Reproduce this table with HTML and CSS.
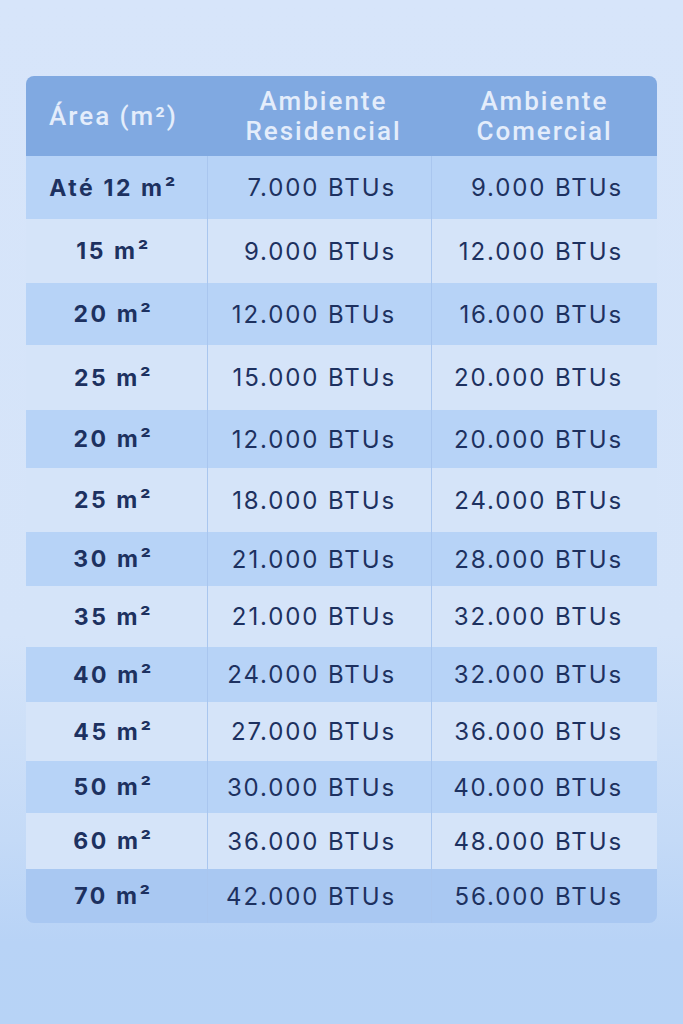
FILE: index.html
```html
<!DOCTYPE html>
<html lang="pt-BR">
<head>
<meta charset="utf-8">
<title>Tabela de BTUs</title>
<link rel="stylesheet" href="styles.css">
</head>
<body>
<main class="page">
  <div class="table">
    <div class="row head">
      <div class="cell c1">Área (m²)</div>
      <div class="cell c2">Ambiente<br>Residencial</div>
      <div class="cell c3">Ambiente<br>Comercial</div>
    </div>
    <div class="row blue"><div class="cell c1">Até 12 m²</div><div class="cell c2">7.000 BTUs</div><div class="cell c3">9.000 BTUs</div></div>
    <div class="row light"><div class="cell c1">15 m²</div><div class="cell c2">9.000 BTUs</div><div class="cell c3">12.000 BTUs</div></div>
    <div class="row blue"><div class="cell c1">20 m²</div><div class="cell c2">12.000 BTUs</div><div class="cell c3">16.000 BTUs</div></div>
    <div class="row light"><div class="cell c1">25 m²</div><div class="cell c2">15.000 BTUs</div><div class="cell c3">20.000 BTUs</div></div>
    <div class="row blue"><div class="cell c1">20 m²</div><div class="cell c2">12.000 BTUs</div><div class="cell c3">20.000 BTUs</div></div>
    <div class="row light"><div class="cell c1">25 m²</div><div class="cell c2">18.000 BTUs</div><div class="cell c3">24.000 BTUs</div></div>
    <div class="row blue"><div class="cell c1">30 m²</div><div class="cell c2">21.000 BTUs</div><div class="cell c3">28.000 BTUs</div></div>
    <div class="row light"><div class="cell c1">35 m²</div><div class="cell c2">21.000 BTUs</div><div class="cell c3">32.000 BTUs</div></div>
    <div class="row blue"><div class="cell c1">40 m²</div><div class="cell c2">24.000 BTUs</div><div class="cell c3">32.000 BTUs</div></div>
    <div class="row light"><div class="cell c1">45 m²</div><div class="cell c2">27.000 BTUs</div><div class="cell c3">36.000 BTUs</div></div>
    <div class="row blue"><div class="cell c1">50 m²</div><div class="cell c2">30.000 BTUs</div><div class="cell c3">40.000 BTUs</div></div>
    <div class="row light"><div class="cell c1">60 m²</div><div class="cell c2">36.000 BTUs</div><div class="cell c3">48.000 BTUs</div></div>
    <div class="row deep last"><div class="cell c1">70 m²</div><div class="cell c2">42.000 BTUs</div><div class="cell c3">56.000 BTUs</div></div>
  </div>
</main>
</body>
</html>
```

FILE: styles.css
```css
* { box-sizing: border-box; }

html, body {
  margin: 0;
  padding: 0;
}

body {
  width: 683px;
  height: 1024px;
  overflow: hidden;
  background: linear-gradient(180deg, #d7e5fa 0%, #d5e4f9 62%, #c4daf7 82%, #b8d3f6 92%, #b7d3f6 100%);
  font-family: Inter, "Noto Sans", Arial, sans-serif;
  color: #1d3160;
}

.page {
  padding: 76px 26px 0 26px;
}

.table {
  width: 631px;
  display: grid;
  grid-template-columns: 181px 224px 226px;
  grid-template-rows: 80px 63px 64px 62px 65px 58px 64px 54px 61px 55px 59px 52px 56px 54px;
  border-radius: 8px;
  overflow: hidden;
}

.row {
  display: contents;
}

.cell {
  display: flex;
  align-items: center;
  font-size: 24px;
  font-weight: 400;
  letter-spacing: 1.9px;
  white-space: nowrap;
}

.cell.c1 {
  justify-content: center;
  padding-right: 6px;
  font-weight: 700;
  font-size: 23px;
  letter-spacing: 2.6px;
}

.cell.c2,
.cell.c3 {
  justify-content: flex-end;
  border-left: 1px solid #a9c6ef;
}

.cell.c2 { padding-right: 35px; }
.cell.c3 { padding-right: 34px; }

.head .cell {
  background: #80a9e1;
  color: #e4edfb;
  font-family: Roboto, Inter, sans-serif;
  font-weight: 500;
  font-size: 26px;
  line-height: 30px;
  letter-spacing: 2px;
  text-align: center;
  justify-content: center;
  padding: 0;
  border-left-color: #80a9e1;
}

.head .cell.c1 { padding-right: 6px; }
.head .cell.c2 { padding-left: 8px; }

.blue .cell { background: #b7d3f7; }
.light .cell { background: #d5e4f9; }
.deep .cell { background: #a9c8f2; }
```
